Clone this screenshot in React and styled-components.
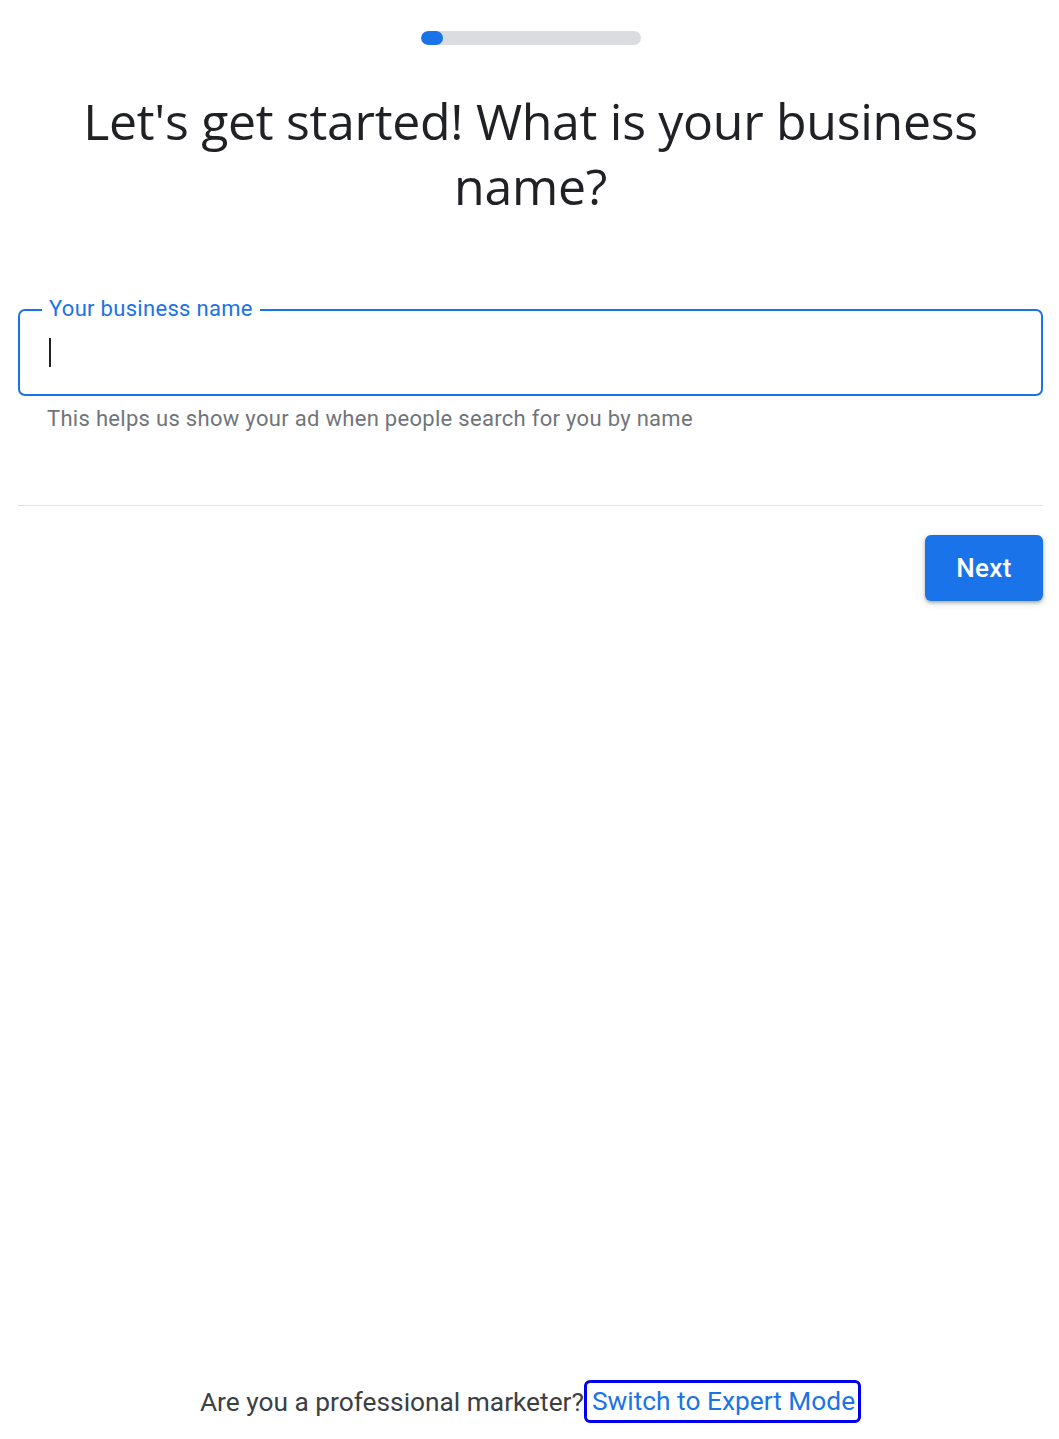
import React from "react";
import styled, { createGlobalStyle } from "styled-components";

const GlobalStyle = createGlobalStyle`
  html, body {
    margin: 0;
    padding: 0;
    background: #ffffff;
  }
  body {
    font-family: Roboto, "Liberation Sans", sans-serif;
    color: #3c4043;
  }
`;

const Page = styled.div`
  box-sizing: border-box;
  min-height: 100vh;
  padding: 0 16px 16px 18px;
  display: flex;
  flex-direction: column;
`;

const Progress = styled.div`
  align-self: center;
  margin-top: 31px;
  width: 220px;
  height: 14px;
  border-radius: 7px;
  background: #dadce0;
  overflow: hidden;

  span {
    display: block;
    width: 22px;
    height: 100%;
    border-radius: 7px;
    background: #1a73e8;
  }
`;

const Title = styled.h1`
  margin: 44px 0 0;
  font-family: "Open Sans", sans-serif;
  font-weight: 400;
  font-size: 50px;
  line-height: 65px;
  color: #202124;
  text-align: center;
  letter-spacing: -0.3px;
`;

const Field = styled.div`
  position: relative;
  margin-top: 90px;
  height: 87px;
  box-sizing: border-box;
  border: 2px solid #1a73e8;
  border-radius: 7px;
  display: flex;
  align-items: center;
  padding-left: 29px;
`;

const Label = styled.label`
  position: absolute;
  top: -15px;
  left: 22px;
  padding: 0 7px;
  background: #fff;
  color: #1a73e8;
  font-size: 22px;
  letter-spacing: 0.3px;
  line-height: 26px;
`;

const Caret = styled.span`
  width: 2px;
  height: 29px;
  background: #202124;
`;

const Helper = styled.p`
  margin: 10px 0 0 29px;
  font-size: 22px;
  letter-spacing: 0.3px;
  line-height: 26px;
  color: #70757a;
`;

const Divider = styled.hr`
  margin: 73px 0 0;
  border: 0;
  border-top: 1px solid #e0e0e0;
`;

const Actions = styled.div`
  display: flex;
  justify-content: flex-end;
  margin-top: 29px;
`;

const Button = styled.button`
  width: 118px;
  height: 66px;
  border: 0;
  border-radius: 6px;
  background: #1a73e8;
  color: #fff;
  font-family: Roboto, sans-serif;
  font-weight: 500;
  font-size: 26px;
  letter-spacing: 0.3px;
  box-shadow: 0 2px 3px rgba(60, 64, 67, 0.3), 0 2px 6px 1px rgba(60, 64, 67, 0.15);
  cursor: pointer;
`;

const Footer = styled.div`
  margin-top: auto;
  display: flex;
  justify-content: center;
  align-items: center;
  font-size: 26.3px;
  color: #3c4043;
`;

const ExpertLink = styled.a`
  color: #1a73e8;
  text-decoration: none;
  border: 3px solid #0000ee;
  border-radius: 6px;
  padding: 3px 3px 4px 5px;
  line-height: 30px;
`;

export default function App() {
  return (
    <>
      <GlobalStyle />
      <Page>
        <Progress>
          <span />
        </Progress>
        <Title>
          Let's get started! What is your business
          <br />
          name?
        </Title>
        <Field>
          <Label>Your business name</Label>
          <Caret />
        </Field>
        <Helper>This helps us show your ad when people search for you by name</Helper>
        <Divider />
        <Actions>
          <Button>Next</Button>
        </Actions>
        <Footer>
          Are you a professional marketer?
          <ExpertLink href="#">Switch to Expert Mode</ExpertLink>
        </Footer>
      </Page>
    </>
  );
}
